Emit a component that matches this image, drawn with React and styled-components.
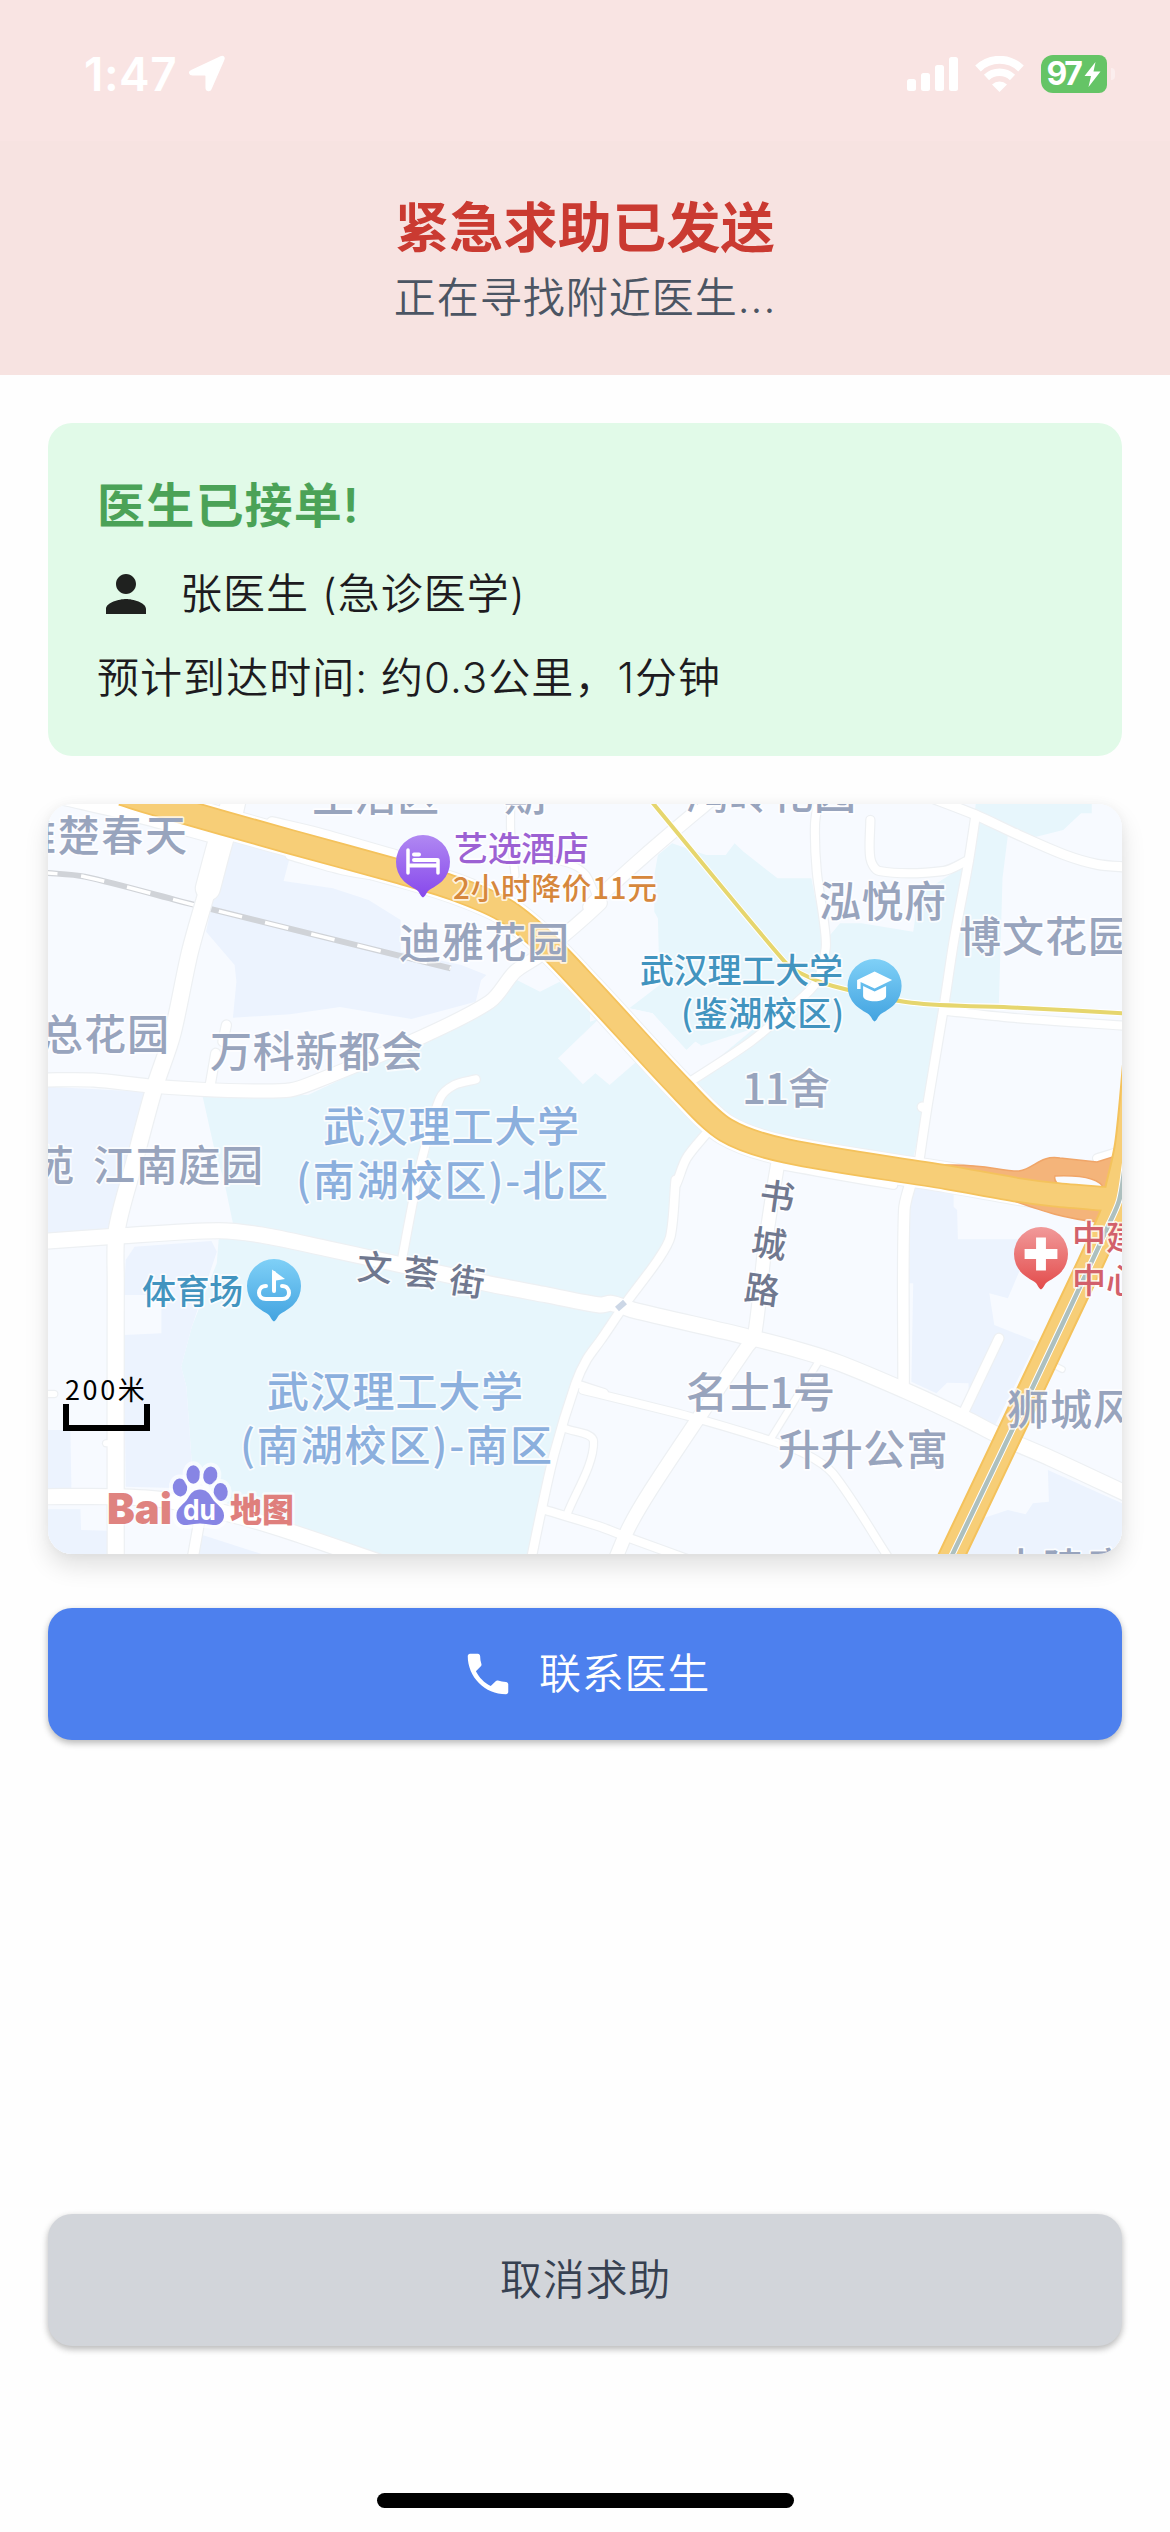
import React from "react";
import styled, { createGlobalStyle } from "styled-components";

const GlobalStyle = createGlobalStyle`
  * { box-sizing: border-box; }
  html, body { margin: 0; padding: 0; background: #fefefe; }
  body { font-family: Inter, "Noto Sans CJK SC", sans-serif; }
`;

const Screen = styled.div`
  width: 1170px;
  height: 2532px;
  display: flex;
  flex-direction: column;
  overflow: hidden;
  background: #fefefe;
`;

const StatusBar = styled.div`
  flex: none;
  height: 141px;
  padding: 7px 55px 0 84px;
  display: flex;
  align-items: center;
  justify-content: space-between;
  background: #f9e4e3;
  color: #fff;
`;

const StatusGroup = styled.div`
  display: flex;
  align-items: center;
  gap: ${(p) => p.$gap}px;
`;

const Clock = styled.span`
  font-size: 46px;
  font-weight: 600;
  line-height: 46px;
  letter-spacing: 0.5px;
`;

const Battery = styled.div`
  width: 66px;
  height: 38px;
  border-radius: 12px 8px 8px 12px;
  background: #65c466;
  display: flex;
  align-items: center;
  justify-content: center;
  gap: 1px;
  font-size: 32px;
  font-weight: 700;
  line-height: 38px;
  letter-spacing: -2.5px;
  svg { flex: none; margin-left: 3px; }
`;

const BatteryCap = styled.span`
  width: 4px;
  height: 12px;
  margin-left: -13px;
  border-radius: 0 4px 4px 0;
  background: #fbeeee;
`;

const Header = styled.header`
  flex: none;
  height: 234px;
  padding-top: 53px;
  display: flex;
  flex-direction: column;
  align-items: center;
  background: #f7e3e1;
`;

const Title = styled.h1`
  margin: 0;
  font-size: 54px;
  line-height: 70px;
  font-weight: 600;
  letter-spacing: 0.3px;
  color: #ca3a31;
`;

const Subtitle = styled.p`
  margin: 4px 0 0;
  font-size: 42px;
  line-height: 60px;
  font-weight: 350;
  letter-spacing: 1px;
  color: #4b5563;
`;

const Content = styled.main`
  flex: 1;
  min-height: 0;
  padding: 48px 48px 0;
  display: flex;
  flex-direction: column;
`;

const DoctorCard = styled.section`
  flex: none;
  height: 333px;
  padding: 48px;
  border-radius: 24px;
  background: #e1fae8;
  display: flex;
  flex-direction: column;
  gap: 24px;
`;

const CardTitle = styled.h2`
  margin: 0;
  font-size: 48px;
  line-height: 69px;
  padding-left: 1px;
  font-weight: 600;
  letter-spacing: 1.2px;
  color: #4ba257;
`;

const InfoRow = styled.div`
  height: 60px;
  display: flex;
  align-items: center;
  gap: 24px;
  font-size: 42px;
  line-height: 60px;
  padding-left: ${(p) => p.$inset || 0}px;
  font-weight: 350;
  letter-spacing: 1.05px;
  color: #1d1b20;
  white-space: pre;
`;

const MapCard = styled.section`
  position: relative;
  height: 750px;
  border-radius: 24px;
  overflow: hidden;
  background: #f7faff;
`;

const MapShadow = styled.div`
  flex: none;
  border-radius: 24px;
  box-shadow: 0 12px 24px rgba(0, 0, 0, 0.12), 0 0 12px rgba(0, 0, 0, 0.04);
  margin-top: 48px;
`;

const MapCanvas = styled.svg`
  display: block;
  width: 1074px;
  height: 750px;
  font-family: "Noto Sans CJK SC", sans-serif;
`;

const ScaleBar = styled.div`
  position: absolute;
  left: 15px;
  top: 570px;
  width: 87px;
  display: flex;
  flex-direction: column;
  color: #000;
  font-family: "Noto Sans CJK SC", sans-serif;
  font-size: 27px;
  line-height: 30px;
  letter-spacing: 2.6px;
  text-indent: 2px;
  white-space: nowrap;
`;

const ScaleBracket = styled.span`
  height: 27px;
  border: 6px solid #000;
  border-top: 0;
`;

const ActionButton = styled.button`
  flex: none;
  height: 132px;
  margin: ${(p) => p.$top} 0 0;
  border: 0;
  padding: 0 0 0 1px;
  border-radius: 24px;
  display: flex;
  align-items: center;
  justify-content: center;
  gap: 24px;
  background: ${(p) => p.$background};
  color: ${(p) => p.$color};
  font: 350 42px/60px Inter, "Noto Sans CJK SC", sans-serif;
  letter-spacing: 0.75px;
  box-shadow: 0 3px 6px rgba(0, 0, 0, 0.2), 0 3px 9px rgba(0, 0, 0, 0.1);
`;

const HomeIndicator = styled.div`
  flex: none;
  width: 417px;
  height: 15px;
  margin: 147px auto 24px;
  border-radius: 8px;
  background: #000;
`;

/* ---------- map geometry ---------- */

// The map is surveyed in four tiles; each letter switches the tile origin.
const TILES = { A: [40, 795], B: [590, 795], C: [40, 1180], D: [590, 1180] };

function toPoints(source) {
  let origin = TILES.A;
  const out = [];
  source.split(/\s+/).forEach((token) => {
    if (TILES[token]) {
      origin = TILES[token];
      return;
    }
    const [x, y] = token.split(",").map(Number);
    out.push([origin[0] + x / 2.8, origin[1] + y / 3]);
  });
  return out;
}

const polygon = (source) => toPoints(source).map((p) => p.map((n) => n.toFixed(1)).join(",")).join(" ");

function curve(source) {
  const pts = toPoints(source);
  let d = `M${pts[0][0]} ${pts[0][1]}`;
  for (let i = 0; i < pts.length - 1; i += 1) {
    const a = pts[i - 1] || pts[i];
    const b = pts[i];
    const c = pts[i + 1];
    const e = pts[i + 2] || c;
    const len = Math.hypot(c[0] - b[0], c[1] - b[1]);
    const handle = (p, q) => {
      const l = Math.hypot(q[0] - p[0], q[1] - p[1]) || 1;
      return [((q[0] - p[0]) / l) * len * 0.3, ((q[1] - p[1]) / l) * len * 0.3];
    };
    const h1 = handle(a, c);
    const h2 = handle(b, e);
    d += `C${b[0] + h1[0]} ${b[1] + h1[1]} ${c[0] - h2[0]} ${c[1] - h2[1]} ${c[0]} ${c[1]}`;
  }
  return d;
}

const CAMPUS = [
  "A 455,903 750,900 870,840 1260,640 1335,555 1400,590 1455,560 1568,672 B 250,890 330,990 270,1090 240,1170 D 240,0 225,170 190,240 100,370 0,500 C 1500,620 1370,1140 950,1140 500,960 425,850 410,620 395,560 425,440 495,250 500,180 540,130 515,0 A 490,1070",
  "B 190,180 230,145 325,180 380,180 405,145 430,170 525,250 620,250 655,440 680,410 700,385 760,385 905,410 920,300 1050,210 990,640 935,950 900,1110 560,1060 400,990 280,860 400,740 310,750 295,740 270,765 175,655 110,640 195,570 190,370 180,350 180,240",
  "B 250,890 310,750 560,640 700,600 990,640 935,950 900,1110 560,1060 400,990",
  "B 1080,27 1405,27 1405,55 1375,55 1325,105 1250,125 1170,120 1155,250 1145,625 1005,625 1050,300",
];

const PLAIN = [
  "A 1450,790 1568,668 B 30,650 130,800 55,870 15,835 -20,868",
  "B 110,640 175,655 270,765 295,740 310,752 460,700 280,860 0,540 0,680",
];

const BLOCKS = [
  "A 545,135 700,185 682,258 820,280 920,315 1010,375 1010,470 1180,510 1250,540 1235,555 1220,620 1040,672 840,636 700,658 540,668 550,560 545,510 465,410 480,330",
  "A 22,875 295,890 245,1170 C 200,145 22,160",
  "C 265,200 480,183 495,215 425,440 395,560 410,620 425,850 400,925 240,920 235,465 340,460 340,345 235,345 240,240",
  "C 22,750 85,750 88,925 22,925",
  "C 22,988 113,988 115,1050 190,1052 190,1122 22,1122",
  "C 455,1065 620,1122 440,1122",
  "D 920,-5 1018,10 1018,80 1028,90 1030,178 1240,178 1170,355 1118,340 1132,435 1250,485 1130,745 1060,710 1060,610 1000,608 970,640 900,605 905,310 890,310 890,100",
  "D 1100,1015 1170,990 1220,1003 1240,970 1285,965 1282,870 1490,970 1490,1122 1055,1122",
];

const ROADS = [
  ["A 545,0 530,70 508,130 470,280", 24],
  ["A 470,280 420,470 370,720 320,880 262,1110 C 215,150 212,300 212,1150", 16],
  ["A 0,855 150,855 300,872 450,883 600,888 700,885 760,865 1050,735 1260,620 1330,530 1400,480 1568,325 B 0,335 150,185 320,30 400,-40", 13],
  ["A 60,10 260,60 500,130", 12],
  ["A 650,85 780,118 1000,185", 12],
  ["A 700,180 850,225 1000,250", 9],
  ["A 522,690 512,740", 9],
  ["A 492,775 475,880", 9],
  ["A 1220,853 1160,870 1120,910 1070,1090 C 1045,60 1015,230", 8],
  ["A 1318,10 1318,110 1330,240", 7],
  ["A 1420,190 1490,210 1530,240 1560,310", 6],
  ["C 0,185 220,168 500,152 620,165 800,205 950,240 1250,310 1420,345 1568,375 D 60,370 120,390 440,470 600,515 700,550 900,640 1050,715 1150,770 1290,835 1520,950", 15],
  ["C 0,642 40,642", 6],
  ["C 0,950 210,950 350,960 560,1010 700,1055 960,1150", 15],
  ["C 450,1000 425,1150", 10],
  ["B 640,10 630,90 635,230 655,380 660,460 635,560 560,640 450,740 280,860", 8],
  ["B 785,75 785,190 810,228 990,228 1060,195", 8],
  ["B 960,10 1080,60 1200,120 1330,180 1420,208 1510,217", 9],
  ["B 1080,60 1060,200 1020,430 990,640 945,930 920,1110", 8.5],
  ["B 1000,648 1200,670 1510,693", 8],
  ["B 930,936 936,938", 9],
  ["B 330,1010 270,1090 240,1170 D 240,0 225,170 190,240 100,370 30,480 C 1530,540 1500,610 1440,820 1400,1010 1375,1140", 8.5],
  ["B 525,1110 D 515,20 490,200 460,470 440,500 300,720 170,930 110,1040 70,1140", 13],
  ["B 540,1115 850,1172 D 820,5 850,-5", 6],
  ["D 640,545 510,770", 6],
  ["D -20,630 280,710 500,780 600,820 680,880 840,1140", 7.5],
  ["C 1500,610 1580,638", 7],
  ["C 1470,745 1550,785 1475,1005", 7],
  ["C 1415,990 1568,1040 D 100,1070 280,1140", 8],
  ["D 900,0 880,90 878,610", 10.5],
  ["D 1145,475 1045,700", 9],
  ["D 1270,540 1322,568", 5],
  ["B 1420,1090 1480,1070", 8],
  ["C 185,790 200,790", 6],
];

const HIGHWAY = "A 230,-5 327,27 700,140 1000,228 1160,280 1300,345 1410,440 B 0,585 255,880 380,1005 550,1068 1000,1147 D 1200,30 1300,44 1460,58";
const AVENUE = "B 1530,780 1505,1050 D 1475,40 1460,110 1313,450 1015,1122 990,1180";
const METRO = "D 1500,-60 1482,60 1450,140 1405,245 1240,620 1005,1145";
const YELLOW_LINE = "B 165,10 545,500 590,535 680,573 900,623 1200,638 1510,656";
const RAILWAY = "A 10,233 125,245 440,332 1150,520";

const GREY = "#98a4bd";
const BLUE = "#8bafdd";
const TEAL = "#4294bf";
const ROSE = "#d2606b";

// text, x, baseline, drawn width, size, colour
const LABELS = [
  ["雅楚春天", 14, 851, 173, 42, GREY],
  ["生活区", 312, 811, 127, 42, GREY],
  ["期", 504, 811, 42, 42, GREY],
  ["艺选酒店", 454, 861, 135, 34, "#9c61d3"],
  ["2小时降价11元", 453, 899, 204, 29.5, "#d6873c"],
  ["迪雅花园", 399, 958, 170, 42, GREY],
  ["总花园", 41, 1050, 128, 42, GREY],
  ["万科新都会", 210, 1067, 213, 42, GREY],
  ["苑", 32, 1181, 42, 42, GREY],
  ["江南庭园", 93, 1181, 170, 42, GREY],
  ["武汉理工大学", 323, 1142, 256, 42, BLUE],
  ["(南湖校区)-北区", 296, 1196, 312, 42, BLUE],
  ["武汉理工大学", 267, 1407, 256, 42, BLUE],
  ["(南湖校区)-南区", 240, 1461, 312, 42, BLUE],
  ["体育场", 142, 1304, 101, 34, TEAL],
  ["鸿岭花园", 686, 809, 170, 42, GREY],
  ["泓悦府", 819, 917, 127, 42, GREY],
  ["博文花园", 959, 952, 171, 42, GREY],
  ["武汉理工大学", 640, 983, 203, 34, TEAL],
  ["(鉴湖校区)", 681, 1026, 163, 34, TEAL],
  ["11舍", 742, 1104, 88, 42, GREY],
  ["名士1号", 686, 1408, 149, 42, GREY],
  ["升升公寓", 778, 1465, 170, 42, GREY],
  ["狮城风", 1007, 1425, 128, 42, GREY],
  ["中建康", 1000, 1584, 128, 42, GREY],
  ["中建", 1072, 1250, 68, 34, ROSE],
  ["中心", 1072, 1293, 68, 34, ROSE],
];

const STREET_CHARS = [
  ["文", 374.6, 1268, 4], ["荟", 421, 1273, 6], ["街", 467, 1282, 9],
  ["书", 777, 1197, 8], ["城", 769, 1244, 8], ["路", 762, 1290, 8],
];

function Pin({ x, y, fill, children }) {
  return (
    <g transform={`translate(${x} ${y})`}>
      <path
        d="M0 35.5C-3 34-3 30-7 27.5C-13 24-16 22-19.5 18.7A27 27 0 1 1 19.5 18.7C16 22 13 24 7 27.5C3 30 3 34 0 35.5Z"
        fill={`url(#${fill})`}
      />
      {children}
    </g>
  );
}

function Gradient({ id, from, to }) {
  return (
    <linearGradient id={id} x1="0" y1="0" x2="0" y2="1">
      <stop offset="0" stopColor={from} />
      <stop offset="1" stopColor={to} />
    </linearGradient>
  );
}

function BaiduLogo() {
  return (
    <g>
      <g stroke="#fff" strokeOpacity="0.6" strokeWidth="8" strokeLinejoin="round" fill="#8785e4" paintOrder="stroke">
        <ellipse cx="180" cy="1487.5" rx="7.2" ry="9" transform="rotate(-6 180 1487.5)" />
        <ellipse cx="193.3" cy="1474.5" rx="6.8" ry="9.3" />
        <ellipse cx="210.3" cy="1475.5" rx="7" ry="9" transform="rotate(10 210.3 1475.5)" />
        <ellipse cx="220.7" cy="1492" rx="7" ry="9" transform="rotate(-4 220.7 1492)" />
        <path d="M200 1489.5C206 1489.5 209 1493 212 1498C216 1505 224 1507 224 1515.5C224 1522 219 1525.5 213 1525C208 1524.5 204 1523.5 200 1523.5C196 1523.5 192 1524.5 187 1525C181 1525.5 176.5 1522 176.5 1515.5C176.5 1507 184 1505 188 1498C191 1493 194 1489.5 200 1489.5Z" />
      </g>
      <text x="107" y="1523.5" fontFamily="Inter, sans-serif" fontWeight="900" fontSize="42.5" textLength="65" lengthAdjust="spacingAndGlyphs" fill="#df8380" stroke="#fff" strokeOpacity="0.5" strokeWidth="3" paintOrder="stroke">Bai</text>
      <text x="183" y="1520" fontFamily="Inter, sans-serif" fontWeight="700" fontSize="29" textLength="33" lengthAdjust="spacingAndGlyphs" fill="#fff">du</text>
      <text x="230" y="1521.5" fontWeight="900" fontSize="33" textLength="64" lengthAdjust="spacingAndGlyphs" fill="#df7f7c" stroke="#fff" strokeOpacity="0.6" strokeWidth="5" strokeLinejoin="round" paintOrder="stroke">地图</text>
    </g>
  );
}

function CityMap() {
  return (
    <MapCanvas viewBox="48 804 1074 750">
      <defs>
        <Gradient id="pinPurple" from="#b088f2" to="#8748ec" />
        <Gradient id="pinBlue" from="#7fd0f7" to="#42a3e0" />
        <Gradient id="pinRed" from="#f19a9a" to="#e34b4b" />
      </defs>
      <rect x="48" y="804" width="1074" height="750" fill="#f7faff" />
      {CAMPUS.map((s) => <polygon key={s} points={polygon(s)} fill="#e7f6fc" />)}
      {PLAIN.map((s) => <polygon key={s} points={polygon(s)} fill="#f7faff" />)}
      {BLOCKS.map((s) => <polygon key={s} points={polygon(s)} fill="#ecf3fe" />)}

      <g fill="none">
        <path d={curve(RAILWAY)} stroke="#d0d3d8" strokeWidth="6" />
        <path d={curve(RAILWAY)} stroke="#fff" strokeWidth="3.5" strokeDasharray="24 23.5" strokeDashoffset="10" />
      </g>
      <g fill="none" strokeLinecap="round" strokeLinejoin="round">
        <path d={curve(HIGHWAY)} stroke="#edf0f3" strokeWidth="32" />
        {ROADS.map(([s, w]) => <path key={s} d={curve(s)} stroke="#edf0f3" strokeWidth={w + 2.4} />)}
        <path d={curve(HIGHWAY)} stroke="#fff" strokeWidth="30" />
        {ROADS.map(([s, w]) => <path key={s} d={curve(s)} stroke="#fff" strokeWidth={w} />)}
      </g>
      <path d="M617 1309L625 1302" stroke="#ccd7e6" strokeWidth="6" />

      <g fill="none">
        <path d={curve(YELLOW_LINE)} stroke="#fff" strokeWidth="6" />
        <path d={curve(YELLOW_LINE)} stroke="#e6d66e" strokeWidth="4" />
      </g>

      <path d="M947 1165C985 1164 1000 1171 1019 1171C1035 1168 1040 1155 1060 1158L1097 1162L1122 1154V1222H1098C1060 1218 1040 1210 1005 1198Z" fill="#f4b47a" stroke="#f0a568" strokeWidth="1.5" />
      <path d="M1055 1176C1080 1175 1100 1178 1104 1189L1060 1186C1055 1182 1054 1178 1055 1176Z" fill="#f9fbff" stroke="#f0a568" strokeWidth="1.5" />
      <g fill="none">
        <path d={curve(AVENUE)} stroke="#f4c25c" strokeWidth="27" />
        <path d={curve(HIGHWAY)} stroke="#f4c25c" strokeWidth="25.5" />
        <path d={curve(AVENUE)} stroke="#f7ce77" strokeWidth="23" />
        <path d={curve(HIGHWAY)} stroke="#f7ce77" strokeWidth="22" />
        <path d={curve(METRO)} stroke="#fff" strokeWidth="6.5" />
        <path d={curve(METRO)} stroke="#adc0bf" strokeWidth="4.5" />
      </g>

      <g fontWeight="500" stroke="#fff" strokeOpacity="0.75" strokeWidth="3.5" strokeLinejoin="round" paintOrder="stroke">
        {LABELS.map(([text, x, y, width, size, color]) => (
          <text key={`${x}-${y}`} x={x} y={y} fontSize={size} fill={color} textLength={width}>{text}</text>
        ))}
        {STREET_CHARS.map(([char, x, y, angle]) => (
          <text key={char} transform={`translate(${x} ${y}) rotate(${angle})`} y="12.5" fontSize="35" textAnchor="middle" fill="#70788f">{char}</text>
        ))}
      </g>

      <Pin x={423} y={862} fill="pinPurple">
        <path d="M-15-12V11M15-2V11" stroke="#fff" strokeWidth="3.5" strokeLinecap="round" />
        <path d="M-13 3.5H14M-9-7.5H-4M-9-2H14" stroke="#fff" strokeWidth="4" strokeLinecap="round" />
      </Pin>
      <Pin x={874.6} y={986} fill="pinBlue">
        <path d="M0-14.5L17.5-6L0 2.5L-14-4V3H-17.5V-6Z" fill="#fff" />
        <path d="M-11.5 0L0 5.5L11.5 0V10C11.5 17-11.5 17-11.5 10Z" fill="#fff" />
      </Pin>
      <Pin x={274} y={1286} fill="pinBlue">
        <path d="M0 5V-13" stroke="#fff" strokeWidth="4" strokeLinecap="round" />
        <path d="M-2-16.5L11-7L-1-5Z" fill="#fff" />
        <path d="M-8 0C-13 0-15 3.5-15 7C-15 11-12 13-8 13H8C12 13 15 11 15 7C15 3.5 13 0 8 0" fill="none" stroke="#fff" strokeWidth="4" strokeLinecap="round" />
      </Pin>
      <Pin x={1041} y={1254} fill="pinRed">
        <path d="M0-14V14M-14 0H14" stroke="#fff" strokeWidth="12" strokeLinecap="square" transform="scale(0.82)" />
      </Pin>
      <BaiduLogo />
    </MapCanvas>
  );
}

/* ---------- icons ---------- */

const LocationIcon = () => (
  <svg width="38" height="38" viewBox="0 0 36 37">
    <path d="M3 15.5L31.5 2C33.5 1 35 2.5 34 4.5L21.5 33C20.8 35 17.5 35 17.5 32V20.5C17.5 19.5 17 19 16 19H4C1 19 0.5 16.5 3 15.5Z" fill="#fff" stroke="#fff" strokeWidth="2" strokeLinejoin="round" />
  </svg>
);

const SignalIcon = () => (
  <svg width="51" height="34" viewBox="0 0 51 34" fill="#fff">
    <rect x="0" y="22" width="9" height="12" rx="2.5" />
    <rect x="14" y="16" width="9" height="18" rx="2.5" />
    <rect x="28" y="8" width="9" height="26" rx="2.5" />
    <rect x="42" y="0" width="9" height="34" rx="2.5" />
  </svg>
);

const WifiIcon = () => (
  <svg width="49" height="36" viewBox="0 0 49 36" fill="none" stroke="#fff">
    <path d="M3 12.5A31 31 0 0 1 46 12.5" strokeWidth="8" />
    <path d="M11.5 21.5A19 19 0 0 1 37.5 21.5" strokeWidth="7.5" />
    <path d="M24.5 36L17 28.5A11 11 0 0 1 32 28.5Z" fill="#fff" stroke="none" />
  </svg>
);

const BoltIcon = () => (
  <svg width="17" height="25" viewBox="0 0 17 25">
    <path d="M11.5 0L0.5 14H7L4.5 25L16.5 9.5H9.5Z" fill="#fff" />
  </svg>
);

const PersonIcon = () => (
  <svg width="60" height="60" viewBox="0 0 24 24" fill="#1f211f">
    <path d="M12 12c2.21 0 4-1.79 4-4s-1.79-4-4-4-4 1.79-4 4 1.79 4 4 4zm0 2c-2.67 0-8 1.34-8 4v2h16v-2c0-2.66-5.33-4-8-4z" />
  </svg>
);

const PhoneIcon = () => (
  <svg width="54" height="54" viewBox="0 0 24 24" fill="#fff">
    <path d="M6.62 10.79c1.44 2.83 3.76 5.14 6.59 6.59l2.2-2.2c.27-.27.67-.36 1.02-.24 1.12.37 2.33.57 3.57.57.55 0 1 .45 1 1V20c0 .55-.45 1-1 1-9.39 0-17-7.61-17-17 0-.55.45-1 1-1h3.5c.55 0 1 .45 1 1 0 1.25.2 2.45.57 3.57.11.35.03.74-.25 1.02l-2.2 2.2z" />
  </svg>
);

export default function App() {
  return (
    <Screen>
      <GlobalStyle />
      <StatusBar>
        <StatusGroup $gap={11}>
          <Clock>1:47</Clock>
          <LocationIcon />
        </StatusGroup>
        <StatusGroup $gap={17}>
          <SignalIcon />
          <WifiIcon />
          <Battery>97<BoltIcon /></Battery>
          <BatteryCap />
        </StatusGroup>
      </StatusBar>

      <Header>
        <Title>紧急求助已发送</Title>
        <Subtitle>正在寻找附近医生...</Subtitle>
      </Header>

      <Content>
        <DoctorCard>
          <CardTitle>医生已接单!</CardTitle>
          <InfoRow><PersonIcon /><span>张医生 (急诊医学)</span></InfoRow>
          <InfoRow $inset={1}>预计到达时间: 约0.3公里，1分钟</InfoRow>
        </DoctorCard>

        <MapShadow>
          <MapCard>
            <CityMap />
            <ScaleBar>
              200米
              <ScaleBracket />
            </ScaleBar>
          </MapCard>
        </MapShadow>

        <ActionButton $top="54px" $background="#4d80ee" $color="#fff">
          <PhoneIcon />
          <span>联系医生</span>
        </ActionButton>
        <ActionButton $top="auto" $background="#d2d5da" $color="#374151">
          取消求助
        </ActionButton>
      </Content>
      <HomeIndicator />
    </Screen>
  );
}
